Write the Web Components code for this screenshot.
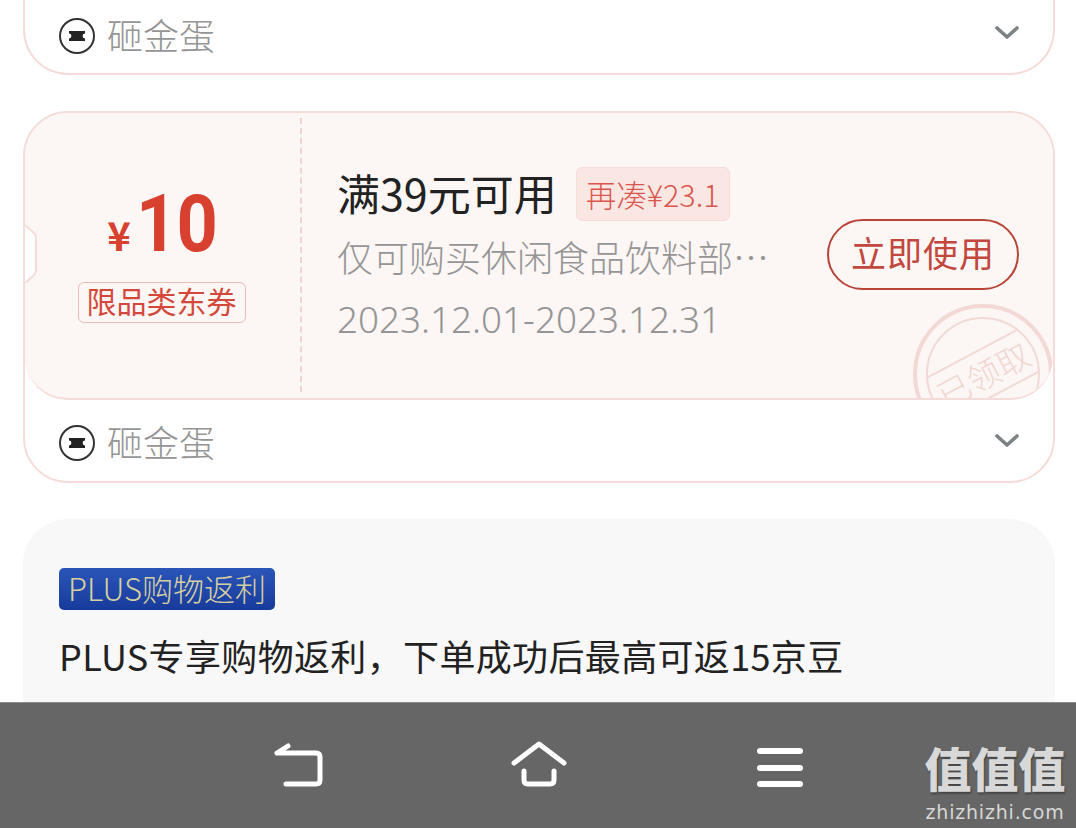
<!DOCTYPE html>
<html>
<head>
<meta charset="utf-8">
<style>
    html, body { margin: 0; padding: 0; background: #fff; }
    body { width: 1076px; height: 828px; overflow: hidden; font-family: "Noto Sans CJK SC", "Noto Sans", sans-serif; font-weight: 300; }
</style>
</head>
<body>
<phone-page>
    <lucky-footer slot="top" cut></lucky-footer>
    <coupon-card></coupon-card>
    <plus-card></plus-card>
</phone-page>

<script>
class PhonePage extends HTMLElement {
    constructor() {
        super();
        this.attachShadow({ mode: 'open' });
        this.shadowRoot.innerHTML = `
        <style>
            :host { display: flex; flex-direction: column; width: 1076px; height: 828px; position: relative; }
            .scroll { height: 702px; overflow: hidden; display: flex; flex-direction: column; gap: 36px; padding: 0 21px 0 23px; }
            .first { display: block; flex: none; width: 1032px; box-sizing: border-box; height: 75px; border: 2px solid #f5dcd9; border-top: none; border-radius: 0 0 45px 45px; }
            .main { display: contents; }
        </style>
        <div class="scroll">
            <div class="first"><slot name="top"></slot></div>
            <div class="main"><slot></slot></div>
        </div>
        <nav-bar></nav-bar>
        `;
    }
}

class LuckyFooter extends HTMLElement {
    constructor() {
        super();
        this.attachShadow({ mode: 'open' });
        this.shadowRoot.innerHTML = `
        <style>
            :host { display: flex; align-items: center; justify-content: space-between; height: 81px; padding: 4px 33px 0 34px; box-sizing: border-box; color: #959595; }
            :host([cut]) { height: 71px; padding-top: 0; }
            .left { display: flex; align-items: center; gap: 12px; font-size: 36px; line-height: 40px; }
            .left span { padding-bottom: 4px; }
            svg { display: block; }
            .chev { margin-bottom: 3px; }
            :host([cut]) .chev { margin-bottom: 6px; }
        </style>
        <div class="left">
            <svg width="36" height="36" viewBox="0 0 36 36">
                <circle cx="18" cy="18" r="17" fill="none" stroke="#333" stroke-width="2"/>
                <path d="M10 13h16v2.6a2.4 2.4 0 0 0 0 4.8V23H10v-2.6a2.4 2.4 0 0 0 0-4.8z" fill="#222"/>
            </svg>
            <span>砸金蛋</span>
        </div>
        <svg class="chev" width="26" height="16" viewBox="0 0 26 16">
            <path d="M3 3l10 9 10-9" fill="none" stroke="#7d8285" stroke-width="3.6" stroke-linecap="round" stroke-linejoin="round"/>
        </svg>
        `;
    }
}

class CouponCard extends HTMLElement {
    constructor() {
        super();
        this.attachShadow({ mode: 'open' });
        this.shadowRoot.innerHTML = `
        <style>
            :host { display: block; width: 1032px; box-sizing: border-box; flex: none; border: 2px solid #f5dcd9; border-radius: 45px; background: #fff; }
            .body { position: relative; display: flex; height: 285px; overflow: hidden; background: #fcf6f4; border-bottom: 2px solid #f5dcd9; border-radius: 43px; box-sizing: content-box; }
            .price { width: 277px; flex: none; box-sizing: border-box; padding-right: 2px; border-right: 2px dashed #f3d3cf; margin: 5px 0 6px; display: flex; flex-direction: column; align-items: center; color: #d8402f; }
            .amount { display: flex; align-items: baseline; height: 96px; margin-top: 58px; padding-right: 2px; margin-bottom: 2px; }
            .yen { font-size: 40px; font-weight: 700; line-height: 1; margin-right: 5px; font-family: "Noto Sans CJK SC", sans-serif; }
            .num { font-family: Roboto, sans-serif; font-weight: 700; font-size: 80px; line-height: 96px; display: inline-block; width: 78px; transform: scaleX(.9); transform-origin: left; letter-spacing: -1px; }
            .limit { margin-top: 8px; height: 41px; width: 168px; box-sizing: border-box; border: 1px solid #e9bdb8; border-radius: 6px; font-size: 30px; font-weight: 400; line-height: 35px; text-align: center; color: #d4483b; white-space: nowrap; }
            .info { flex: 1; padding: 54px 0 0 35px; min-width: 0; }
            .row { display: flex; align-items: center; gap: 19px; height: 54px; }
            .title { font-size: 43px; font-weight: 400; line-height: 50px; padding-bottom: 4px; color: #222; white-space: nowrap; }
            .more { font-size: 30.5px; line-height: 52px; height: 54px; box-sizing: border-box; padding: 0 9px; background: #fae6e3; border: 1px solid #f6dcd9; border-radius: 6px; color: #d9574c; white-space: nowrap; }
            .desc { margin-top: 9px; font-size: 36px; line-height: 52px; color: #959595; white-space: nowrap; }
            .date { margin-top: 11px; font-size: 36.8px; line-height: 52px; color: #959595; white-space: nowrap; font-family: "Noto Sans", sans-serif; }
            .use { position: absolute; left: 802px; top: 106px; width: 192px; height: 71px; box-sizing: border-box; border: 2px solid #b8443a; border-radius: 36px; color: #c2473d; font-size: 35px; font-weight: 400; line-height: 62px; text-align: center; white-space: nowrap; letter-spacing: 1px; }
            .notch { position: absolute; left: 0; top: 112px; display: block; }
            .stamp { position: absolute; left: 885px; top: 188px; display: block; }
            .stamp text { font-family: "Noto Sans CJK SC", sans-serif; font-weight: 300; }
        </style>
        <div class="body">
            <div class="price">
                <div class="amount"><span class="yen">¥</span><span class="num">10</span></div>
                <div class="limit">限品类东券</div>
            </div>
            <div class="info">
                <div class="row"><span class="title">满39元可用</span><span class="more">再凑¥23.1</span></div>
                <div class="desc">仅可购买休闲食品饮料部…</div>
                <div class="date">2023.12.01-2023.12.31</div>
            </div>
            <div class="use">立即使用</div>
            <svg class="notch" width="14" height="58" viewBox="0 0 14 58">
                <path d="M0 0l9 8q2 2 2 5v32q0 3-2 5L0 58z" fill="#fff"/>
                <path d="M0 0l9 8q2 2 2 5v32q0 3-2 5L0 58" fill="none" stroke="#f5dcd9" stroke-width="2"/>
            </svg>
            <svg class="stamp" width="146" height="146" viewBox="0 0 146 146">
                <circle cx="73" cy="73" r="68" fill="none" stroke="#f3d9d5" stroke-width="4"/>
                <circle cx="73" cy="73" r="56" fill="none" stroke="#f3d9d5" stroke-width="2"/>
                <g transform="rotate(-28 73 73)" fill="#f2d6d2">
                    <path d="M21 50h104M21 97h104" stroke="#f3d9d5" stroke-width="2"/>
                    <text x="73" y="87" font-size="33" text-anchor="middle">已领取</text>
                </g>
            </svg>
        </div>
        <lucky-footer></lucky-footer>
        `;
    }
}

class PlusCard extends HTMLElement {
    constructor() {
        super();
        this.attachShadow({ mode: 'open' });
        this.shadowRoot.innerHTML = `
        <style>
            :host { display: block; width: 1032px; box-sizing: border-box; flex: none; height: 260px; padding: 49px 36px 0; background: #f8f8f8; border-radius: 45px; }
            .badge { display: inline-block; height: 42px; width: 216px; box-sizing: border-box; text-align: center; background: linear-gradient(#2a55b8, #173b9c); border-radius: 5px; color: #d8cfa0; font-size: 31px; line-height: 40px; white-space: nowrap; vertical-align: top; }
            .text { margin-top: 20px; font-size: 36px; font-weight: 400; line-height: 50px; color: #222; white-space: nowrap; letter-spacing: .35px; }
        </style>
        <span class="badge">PLUS购物返利</span>
        <div class="text">PLUS专享购物返利，下单成功后最高可返15京豆</div>
        `;
    }
}

class NavBar extends HTMLElement {
    constructor() {
        super();
        this.attachShadow({ mode: 'open' });
        this.shadowRoot.innerHTML = `
        <style>
            :host { display: flex; justify-content: center; gap: 185px; height: 126px; box-sizing: border-box; padding: 38px 0 0 1px; background: #666; position: relative; border-top: 1px solid #8a8a8a; }
            svg { display: block; }
            .menu { margin-left: 5px; }
            .wm { position: absolute; right: 8px; top: 39px; width: 146px; text-align: center; color: #d8d8d8; }
            .wm b { display: block; font-family: "Noto Sans CJK SC", sans-serif; font-weight: 900; font-size: 47px; line-height: 50px; text-shadow: 1px 2px 2px #444; }
            .wm span { display: block; font-family: "DejaVu Sans", sans-serif; font-weight: 400; font-size: 19px; line-height: 24px; letter-spacing: .8px; margin-top: 8px; }
        </style>
        <svg width="52" height="46" viewBox="0 0 52 46" fill="none" stroke="#fff" stroke-width="5" stroke-linecap="round" stroke-linejoin="round">
            <path d="M3 12L14 5M3 12h39q4 0 4 4v23q0 4-4 4H12"/>
        </svg>
        <svg width="56" height="46" viewBox="0 0 56 46" fill="none" stroke="#fff" stroke-width="5" stroke-linecap="round" stroke-linejoin="round">
            <path d="M3 22L28 3l25 19M13 30v9q0 4 4 4h22q4 0 4-4v-9"/>
        </svg>
        <svg class="menu" width="46" height="46" viewBox="0 0 46 46" fill="none" stroke="#fff" stroke-width="6" stroke-linecap="round">
            <path d="M3 10h40M3 27h40M3 43h40"/>
        </svg>
        <div class="wm"><b>值值值</b><span>zhizhizhi.com</span></div>
        `;
    }
}

customElements.define('lucky-footer', LuckyFooter);
customElements.define('coupon-card', CouponCard);
customElements.define('plus-card', PlusCard);
customElements.define('nav-bar', NavBar);
customElements.define('phone-page', PhonePage);
</script>
</body>
</html>
